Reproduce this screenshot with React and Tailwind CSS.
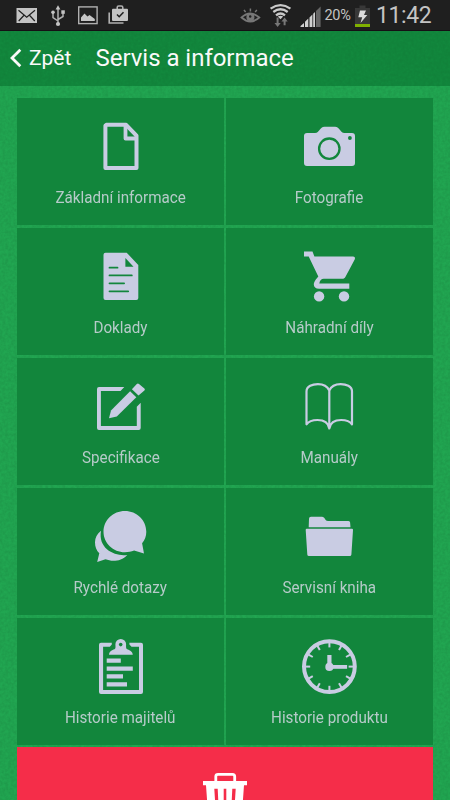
import clsx from 'clsx';

const ICON = '#c9cce3';
const TILE = '#12863c';

function TileIcon({ children }) {
  return (
    <svg width="60" height="60" viewBox="0.5 0 60 60" fill={ICON} className="shrink-0">
      {children}
    </svg>
  );
}

const DOC = 'M15 4.7H36.2L47.8 17V50a2 2 0 0 1-2 2H15a2 2 0 0 1-2-2V6.7a2 2 0 0 1 2-2Z';

const icons = {
  file: (
    <TileIcon>
      <path d="M15.8 6.8H35.6L46 17.6V50H14.9V7.7Z" fill="none" stroke={ICON} strokeWidth="4" strokeLinejoin="round" />
      <path d="M35 7V20.5H46" fill="none" stroke={ICON} strokeWidth="3.8" strokeLinejoin="round" />
    </TileIcon>
  ),
  camera: (
    <TileIcon>
      <path d="M7.5 15H15.5C18 15 18.8 13.5 20 12C21.5 10 22.5 8.7 25 8.7H35.5C38 8.7 39 10 40.5 12C41.7 13.5 42.5 15 45 15H52.5a3 3 0 0 1 3 3V45a3 3 0 0 1-3 3H7.5a3 3 0 0 1-3-3V18a3 3 0 0 1 3-3Z" />
      <circle cx="29.8" cy="30.7" r="10.2" fill="none" stroke={TILE} strokeWidth="2.3" />
      <circle cx="50.4" cy="20" r="1.9" fill={TILE} />
    </TileIcon>
  ),
  document: (
    <TileIcon>
      <path d={DOC} />
      <path d="M34.9 10V18.7H43Z" fill={TILE} />
      <path d="M19 19.7H27M19 27.4H41.3M19 35.3H33.6M19 43.3H37.7" stroke={TILE} strokeWidth="1.8" strokeLinecap="round" />
    </TileIcon>
  ),
  cart: (
    <TileIcon>
      <path d="M4.5 3.4H13L14.9 8.6H53.6C55.3 8.6 55.9 10 55.2 11.4L46 28.7C45.2 30.1 44.3 30.7 42.8 30.7H24.2C21.8 30.7 20.3 32.6 19.8 35.4H49.8V40.8H19.5C15.5 40.8 13.7 38.2 14.5 35C15.2 32.3 17.3 30.2 18.8 28.4L9.2 8.6H4.5Z" />
      <circle cx="19.6" cy="48.4" r="5.2" />
      <circle cx="44.5" cy="48.4" r="5.2" />
    </TileIcon>
  ),
  edit: (
    <TileIcon>
      <path d="M8.5 9H33.8L30 12.9H10.4V48.1H46.3V28.7L50.2 24.7V50a2 2 0 0 1-2 2H8.5a2 2 0 0 1-2-2V11a2 2 0 0 1 2-2Z" />
      <path d="M18.5 40.3L20.5 32.5L39.6 13.2L45.8 19.2L26.3 38.5Z" />
      <path d="M41.4 11.3L46.3 6a1.6 1.6 0 0 1 2.2 0L53.9 10.6a1.3 1.3 0 0 1 0 1.9L48 17.5Z" />
    </TileIcon>
  ),
  book: (
    <TileIcon>
      <path
        d="M29.8 50.5V12.5C27.5 7.4 23.5 6.1 18.4 6.1C13 6.1 7 8.2 7 13.5V46.3C9.5 42.7 13.5 42 18 42C24.5 42 28.8 44.5 29.8 50.5C30.8 44.5 35 42 41.6 42C46 42 50.2 42.7 52.5 46.3V13.5C52.5 8.2 46.5 6.1 41.2 6.1C36 6.1 32 7.4 29.8 12.5"
        fill="none"
        stroke={ICON}
        strokeWidth="2.2"
        strokeLinejoin="round"
      />
    </TileIcon>
  ),
  chat: (
    <TileIcon>
      <path d="M34.4 3.1C46.2 3.1 55.8 12.3 55.8 23.7C55.8 28 54.3 32 51.6 35.2L53.5 45.4L43.6 42.5C40.8 43.7 37.7 44.2 34.4 44.2C22.6 44.2 13 35.1 13 23.7C13 12.3 22.6 3.1 34.4 3.1Z" />
      <path d="M10.5 22.8C6.5 26 4.5 30 4.5 34.2C4.5 38.6 5.8 42.2 8.8 45.3L6.7 54L15 51.3C21.5 53.8 30.5 53.6 36.8 46.9C25.5 48.8 7.2 41.5 10.5 22.8Z" />
    </TileIcon>
  ),
  folder: (
    <TileIcon>
      <path d="M9.2 19.2L9.5 10.7a2 2 0 0 1 2-2H22.5C25.5 8.7 25.5 13 28.5 13H49a1.6 1.6 0 0 1 1.6 1.6L51 19.2Z" />
      <path d="M7.3 20.8H52.4a1.1 1.1 0 0 1 1.1 1.2L51.9 46.5a1.7 1.7 0 0 1-1.7 1.6H9.5a1.7 1.7 0 0 1-1.7-1.6L6.2 22a1.1 1.1 0 0 1 1.1-1.2Z" />
    </TileIcon>
  ),
  clipboard: (
    <TileIcon>
      <path d="M10.5 4.7H21.3V6.6L19.3 8.7H12.6V52H48.5V8.7H41L38.9 6.6V4.7H50.5a2 2 0 0 1 2 2V54a2 2 0 0 1-2 2H10.5a2 2 0 0 1-2-2V6.7a2 2 0 0 1 2-2Z" />
      <path d="M18.5 16.8C18.7 13.2 21.5 12 24 11.2C25.5 10.5 24.9 8.5 24.9 6.3A5.3 5.3 0 0 1 35.6 6.3C35.6 8.5 35.2 10.5 36.6 11.2C39 12 42 13.2 42.3 16.8Z" />
      <circle cx="30.2" cy="6.6" r="1.8" fill={TILE} />
      <path d="M16.2 22.7H30.3M16.2 30.7H42.3M16.2 38.4H32.5M16.2 46.4H36.5" stroke={ICON} strokeWidth="4.2" />
    </TileIcon>
  ),
  clock: (
    <TileIcon>
      <circle cx="29.9" cy="28.6" r="25.4" fill="none" stroke={ICON} strokeWidth="4" />
      {Array.from({ length: 12 }, (_, i) => (
        <path key={i} d="M29.9 4.5V9.4" stroke={ICON} strokeWidth="2" transform={`rotate(${i * 30} 29.9 28.6)`} />
      ))}
      <circle cx="29.9" cy="28.9" r="4.1" />
      <path d="M29.9 17V29" stroke={ICON} strokeWidth="4.2" />
      <path d="M30 28.9H47.6" stroke={ICON} strokeWidth="3.8" />
    </TileIcon>
  ),
};

const tiles = [
  { label: 'Základní informace', icon: 'file' },
  { label: 'Fotografie', icon: 'camera' },
  { label: 'Doklady', icon: 'document' },
  { label: 'Náhradní díly', icon: 'cart' },
  { label: 'Specifikace', icon: 'edit' },
  { label: 'Manuály', icon: 'book' },
  { label: 'Rychlé dotazy', icon: 'chat' },
  { label: 'Servisní kniha', icon: 'folder' },
  { label: 'Historie majitelů', icon: 'clipboard' },
  { label: 'Historie produktu', icon: 'clock' },
];

function StatusBar() {
  return (
    <div className="flex h-[31px] shrink-0 items-center border-b border-[#151015] bg-[#1f1f1f] text-[#c4c4c4]">
      <svg width="135" height="30" viewBox="0 0 135 30" fill="#c4c4c4">
        {/* mail */}
        <rect x="16.5" y="8" width="20.5" height="15" />
        <path d="M18.5 10.2L26.7 17.2L35 10.2M18.7 21L23.8 15.5M34.8 21L29.7 15.5" fill="none" stroke="#1f1f1f" strokeWidth="1.2" />
        {/* usb */}
        <path d="M58 8V24M58 21L53 17.5V12M58 19.5L63 16.5V12" fill="none" stroke="#b0b0b0" strokeWidth="1.5" />
        <path d="M55.6 9.5L58 5.2L60.4 9.5Z" />
        <circle cx="58" cy="24" r="2.1" />
        <circle cx="53" cy="12.3" r="1.8" />
        <rect x="61.3" y="10.3" width="3.5" height="3.5" />
        {/* picture */}
        <rect x="78.7" y="6.9" width="18.4" height="16.7" fill="none" stroke="#b0b0b0" strokeWidth="1.4" />
        <path d="M81 21V17.5L84.5 13.5L87.5 16.5L89.5 15L94.8 19V21Z" />
        {/* play store bag */}
        <path d="M109.2 12.5V23H123.5" fill="none" stroke="#b0b0b0" strokeWidth="1.6" />
        <path d="M117.2 9V7.5Q117.2 6 118.7 6H121.3Q122.8 6 122.8 7.5V9" fill="none" stroke="#b0b0b0" strokeWidth="1.6" />
        <rect x="112" y="8.7" width="16" height="12.2" rx="1" />
        <path d="M117 14.5L119.2 16.7L123.5 12.2" fill="none" stroke="#1f1f1f" strokeWidth="1.5" />
      </svg>
      <svg width="82" height="30" viewBox="240 0 82 30" className="ml-[105px]">
        {/* smart stay eye */}
        <path d="M241.5 17.5Q250.3 9.5 259.3 17.5Q250.3 25.5 241.5 17.5Z" fill="none" stroke="#777" strokeWidth="1.8" />
        <circle cx="250.4" cy="17.3" r="4" fill="#777" />
        <circle cx="250.2" cy="16.5" r="1.2" fill="#1f1f1f" />
        <path d="M250.4 8.5V11.5M244 9.8L245.6 12.2M256.8 9.8L255.2 12.2" stroke="#777" strokeWidth="1.5" />
        {/* wifi with data arrows */}
        <g fill="none" stroke="#c9c9c9" strokeWidth="2.3">
          <path d="M270.6 8.6Q280.5 1.6 290.4 8.6" />
          <path d="M273.3 12Q280.5 6.6 287.7 12" />
          <path d="M276 15.3Q280.5 11.6 285 15.3" />
        </g>
        <path d="M277.8 16.6Q280.5 14.8 283.2 16.6L280.5 19.3Z" fill="#c9c9c9" />
        <path d="M276.6 17.5H278.6V23H280.7L277.6 27L274.5 23H276.6Z" fill="#777" />
        <path d="M283.6 25.2H285.6V21.5H287.7L284.6 17.5L281.5 21.5H283.6Z" fill="#777" />
        {/* signal */}
        <path d="M300.5 27V26L304 23V27ZM305 27V21.7L308.3 18.5V27ZM309.5 27V17.5L312.4 14.5V27ZM313.2 27V13.7L315 12V27Z" fill="#d0d0d0" />
        <path d="M316 27V11L320.6 6.5V27Z" fill="#666" />
      </svg>
      <span className="ml-[2.5px] w-[28px] pt-px text-[14.5px] tracking-[-0.3px]">20%</span>
      <svg width="17" height="30" viewBox="0 0 17 30" className="ml-[1.5px]">
        <path d="M1 8H5.5V5.5H11.5V8H16V24H1Z" fill="#383838" />
        <rect x="1" y="24" width="15" height="3" fill="#7fb000" />
        <path d="M6 10.5H12L10 15H13.3L6.5 23L8.2 17.3H4.3Z" fill="#dcdcdc" />
      </svg>
      <span className="ml-[5px] pt-px text-[23px] leading-[30px] tracking-[-0.4px]">11:42</span>
    </div>
  );
}

function Tile({ label, icon }) {
  return (
    <div className="flex h-[127px] flex-col items-center bg-[#12863c] pt-5">
      {icons[icon]}
      <span className="mt-2 scale-x-95 text-[16px] leading-6 whitespace-nowrap text-[#b6cbc9]">{label}</span>
    </div>
  );
}

// leather-like grain laid over the green areas
function Grain({ className }) {
  return (
    <svg className={clsx('pointer-events-none absolute inset-0 h-full w-full', className)}>
      <filter id="grain">
        <feTurbulence type="fractalNoise" baseFrequency="0.35" numOctaves="2" seed="4" />
        <feColorMatrix values="0 0 0 0 0  0 0 0 0 0  0 0 0 0 0  0.9 0 0 0 -0.25" />
      </filter>
      <rect width="100%" height="100%" filter="url(#grain)" />
    </svg>
  );
}

export default function App() {
  return (
    <div className="flex h-screen w-full flex-col overflow-hidden bg-[#21a651] font-['Roboto',sans-serif]">
      <StatusBar />
      <div className="relative flex-1 overflow-hidden">
        <Grain className="opacity-15" />
        <header className="relative flex h-[55px] items-center bg-[#12883d] pb-px text-white">
          <Grain className="opacity-10" />
          <svg width="12" height="20" viewBox="0 0 12 20" className="ml-[10px]">
            <path d="M10.3 1.7L2 10L10.3 18.3" fill="none" stroke="#fff" strokeWidth="2.8" />
          </svg>
          <span className="ml-[7px] w-[43px] pt-px text-[21px] whitespace-nowrap">Zpět</span>
          <h1 className="ml-[23.5px] text-[24px] tracking-[-0.03px] whitespace-nowrap">Servis a informace</h1>
        </header>
        <main className="relative mx-[17px] mt-3">
          <div className="grid grid-cols-2 gap-x-[2px] gap-y-[3px]">
            {tiles.map((tile) => (
              <Tile key={tile.label} {...tile} />
            ))}
          </div>
          <div className="mt-[2px] flex h-[127px] justify-center bg-[#f52d49] pt-[21px]">
            <svg width="60" height="60" viewBox="0 0 60 60" fill="#fff">
              <path d="M20.8 13.5V8.5Q20.8 6.3 23 6.3H37.5Q39.7 6.3 39.7 8.5V13.5" fill="none" stroke="#fff" strokeWidth="2.8" />
              <path d="M8 13H52V17.3H49L46.5 52H13.5L11 17.3H8Z" />
              <path d="M19.3 20.7H22.7L24 48H21ZM28.7 20.7H31.3V48H28.7ZM37.3 20.7H40.7L39 48H36Z" fill="#f52d49" />
            </svg>
          </div>
        </main>
      </div>
    </div>
  );
}
